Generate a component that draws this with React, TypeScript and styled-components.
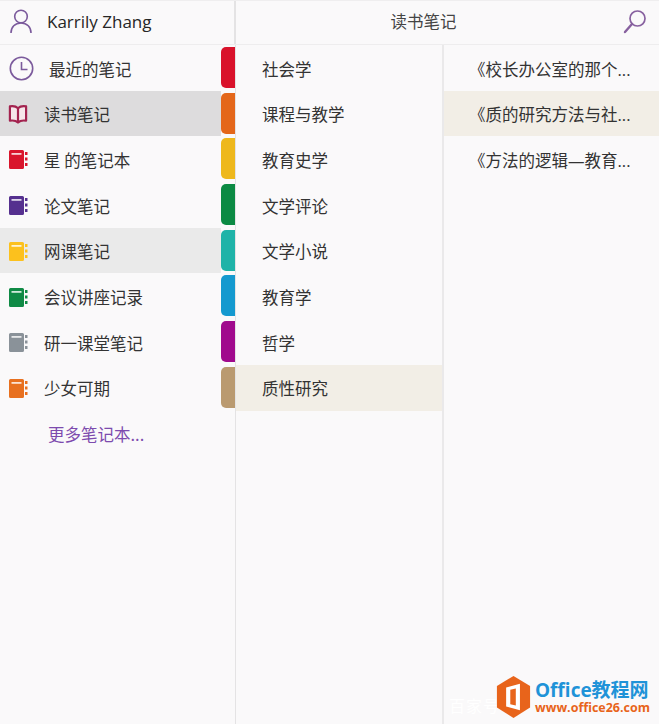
import React from "react";
import styled, { createGlobalStyle } from "styled-components";

const Global = createGlobalStyle`
  html, body { margin: 0; padding: 0; background: #faf9fa; }
  body { font-family: "Noto Sans CJK SC", "Noto Sans", sans-serif; color: #333; }
  * { box-sizing: border-box; }
`;

const Page = styled.div`
  position: relative;
  width: 659px;
  height: 724px;
  overflow: hidden;
  display: flex;
  flex-direction: column;
  background: #faf9fa;
  border-top: 1px solid #efeeef;
`;
const Header = styled.header`
  display: flex;
  height: 44px;
  flex: none;
  border-bottom: 1px solid #eeedee;
`;
const Account = styled.div`
  width: 236px;
  flex: none;
  display: flex;
  align-items: center;
  gap: 15px;
  padding: 0 0 3px 10px;
  font-family: "Open Sans", sans-serif;
  font-size: 17px;
  color: #262626;
  border-right: 2px solid #e4e3e4;
`;
const TitleBar = styled.div`
  flex: 1;
  position: relative;
  display: flex;
  align-items: center;
  justify-content: center;
  padding: 0 48px 3px 0;
  font-size: 16.5px;
  color: #444;
`;
const SearchButton = styled.span`
  position: absolute;
  right: 12px;
  top: 8px;
  display: flex;
`;
const Body = styled.main`
  flex: 1;
  display: flex;
  min-height: 0;
`;
const NavColumn = styled.nav`
  width: 221px;
  flex: none;
  display: flex;
  flex-direction: column;
`;
const Row = styled.div<{ $bg?: string; $pad: number; $gap?: number; $color?: string }>`
  height: 45.7px;
  flex: none;
  display: flex;
  align-items: center;
  gap: ${(p) => p.$gap ?? 0}px;
  padding-left: ${(p) => p.$pad}px;
  padding-top: 1.5px;
  font-size: 16.5px;
  white-space: nowrap;
  background: ${(p) => p.$bg ?? "transparent"};
  color: ${(p) => p.$color ?? "#333"};
`;
const IconSlot = styled.span<{ $w: number }>`
  width: ${(p) => p.$w}px;
  flex: none;
  display: flex;
  align-items: center;
  justify-content: center;
`;
const TabStrip = styled.div`
  width: 15px;
  flex: none;
  display: flex;
  flex-direction: column;
  gap: 4.7px;
  padding-top: 2px;
  border-right: 1px solid #e4e3e4;
`;
const Tab = styled.div<{ $color: string }>`
  height: 41px;
  flex: none;
  width: 14px;
  border-radius: 5px 0 0 5px;
  background: ${(p) => p.$color};
`;
const SectionColumn = styled.section`
  width: 208px;
  flex: none;
  display: flex;
  flex-direction: column;
  border-right: 2px solid #eae9ea;
`;
const PageColumn = styled.section`
  flex: 1;
  min-width: 0;
  display: flex;
  flex-direction: column;
`;
const PageText = styled.span`
  font-family: "Open Sans", "Noto Sans CJK SC", sans-serif;
`;
const Watermark = styled.div`
  position: absolute;
  left: 496px;
  top: 675px;
  display: flex;
  align-items: center;
  gap: 4px;
`;
const GhostMark = styled.span`
  position: absolute;
  left: 449px;
  top: 692px;
  font-size: 16px;
  letter-spacing: 1px;
  color: #ffffff;
`;
const WatermarkText = styled.div`
  display: flex;
  flex-direction: column;
  font-weight: 700;
  white-space: nowrap;
`;
const WatermarkTitle = styled.span`
  font-family: "Open Sans", "Noto Sans CJK SC", sans-serif;
  font-size: 19px;
  line-height: 22px;
  color: #1f93d8;
`;
const WatermarkUrl = styled.span`
  font-family: "Open Sans", sans-serif;
  font-size: 12.5px;
  line-height: 14px;
  color: #e8641b;
`;

const Notebook = ({ color }: { color: string }) => (
  <svg width="20" height="21" viewBox="0 0 20 21">
    <path d="M2.500 1h12a1.500 1.500 0 0 1 1.500 1.500v16a1.500 1.500 0 0 1-1.500 1.500h-12A1.500 1.500 0 0 1 1 18.500v-16A1.500 1.500 0 0 1 2.500 1z" fill={color} />
    <rect x="3.500" y="4" width="10" height="1.800" fill="#fff" opacity=".8" />
    <rect x="17" y="3" width="2.500" height="3" fill={color} />
    <rect x="17" y="8.500" width="2.500" height="3" fill={color} />
    <rect x="17" y="14" width="2.500" height="3" fill={color} />
  </svg>
);

const notebooks = [
  { name: "读书笔记", bg: "#dddcdd", book: true, color: "#a3234f" },
  { name: "星 的笔记本", color: "#d9152c" },
  { name: "论文笔记", color: "#55308f" },
  { name: "网课笔记", bg: "#eaeaea", color: "#fcc11d" },
  { name: "会议讲座记录", color: "#0f8a45" },
  { name: "研一课堂笔记", color: "#8a9299" },
  { name: "少女可期", color: "#e8701f" },
];
const tabs = ["#d9122b", "#e4671a", "#eeb81c", "#0b8a43", "#1fb3a8", "#1499cf", "#a00a8d", "#ba9a70"];
const sections = ["社会学", "课程与教学", "教育史学", "文学评论", "文学小说", "教育学", "哲学", "质性研究"];
const pages = ["《校长办公室的那个...", "《质的研究方法与社...", "《方法的逻辑—教育..."];

export default function App() {
  return (
    <Page>
      <Global />
      <Header>
        <Account>
          <svg width="22" height="26" viewBox="0 0 22 26" fill="none" stroke="#7b5a9c" strokeWidth="1.6">
            <circle cx="11" cy="8.500" r="6.300" />
            <path d="M1 25c0-6 4-10 10-10s10 4 10 10" />
          </svg>
          Karrily Zhang
        </Account>
        <TitleBar>
          读书笔记
          <SearchButton>
            <svg width="24" height="25" viewBox="0 0 24 25" fill="none" stroke="#87609f" strokeWidth="1.700">
              <circle cx="14.500" cy="9.500" r="7.500" />
              <path d="M9 15L2 23" strokeWidth="2.400" strokeLinecap="round" />
            </svg>
          </SearchButton>
        </TitleBar>
      </Header>
      <Body>
        <NavColumn>
          <Row $pad={8} $gap={15}>
            <IconSlot $w={26}>
              <svg width="25" height="25" viewBox="0 0 25 25" fill="none" stroke="#7b5a9c" strokeWidth="1.600">
                <circle cx="12.500" cy="12.500" r="11.200" />
                <path d="M12.500 6v7.500h6" />
              </svg>
            </IconSlot>
            最近的笔记
          </Row>
          {notebooks.map((n) => (
            <Row key={n.name} $pad={8} $gap={16} $bg={n.bg}>
              <IconSlot $w={20}>
                {n.book ? (
                  <svg width="21" height="21" viewBox="0 0 21 21" fill="#f6e6ea" stroke={n.color} strokeWidth="2.300" strokeLinejoin="round">
                    <path d="M10.500 4C8.500 2 5 1.500 2 2v15c3-.5 6.500 0 8.500 2 2-2 5.500-2.500 8.500-2V2c-3-.5-6.500 0-8.500 2zM10.500 4v15" />
                  </svg>
                ) : (
                  <Notebook color={n.color} />
                )}
              </IconSlot>
              {n.name}
            </Row>
          ))}
          <Row $pad={48} $color="#7d4bae">更多笔记本...</Row>
        </NavColumn>
        <TabStrip>
          {tabs.map((c) => (
            <Tab key={c} $color={c} />
          ))}
        </TabStrip>
        <SectionColumn>
          {sections.map((s, i) => (
            <Row key={s} $pad={26} $bg={i === 7 ? "#f2eee6" : undefined}>
              {s}
            </Row>
          ))}
        </SectionColumn>
        <PageColumn>
          {pages.map((p, i) => (
            <Row key={p} $pad={25} $bg={i === 1 ? "#f2eee6" : undefined}>
              <PageText>{p}</PageText>
            </Row>
          ))}
        </PageColumn>
      </Body>
      <GhostMark>百家号</GhostMark>
      <Watermark>
        <svg width="35" height="42" viewBox="0 0 38 44" preserveAspectRatio="none">
          <path d="M19 0L37 10.500V33L19 44 1 33V10.500z" fill="#e8641b" />
          <path d="M11 12l15-4v28l-15-4z" fill="#fff" />
          <path d="M15.500 14.500l6-1.500v18l-6-1.500z" fill="#e8641b" />
        </svg>
        <WatermarkText>
          <WatermarkTitle>Office教程网</WatermarkTitle>
          <WatermarkUrl>www.office26.com</WatermarkUrl>
        </WatermarkText>
      </Watermark>
    </Page>
  );
}
